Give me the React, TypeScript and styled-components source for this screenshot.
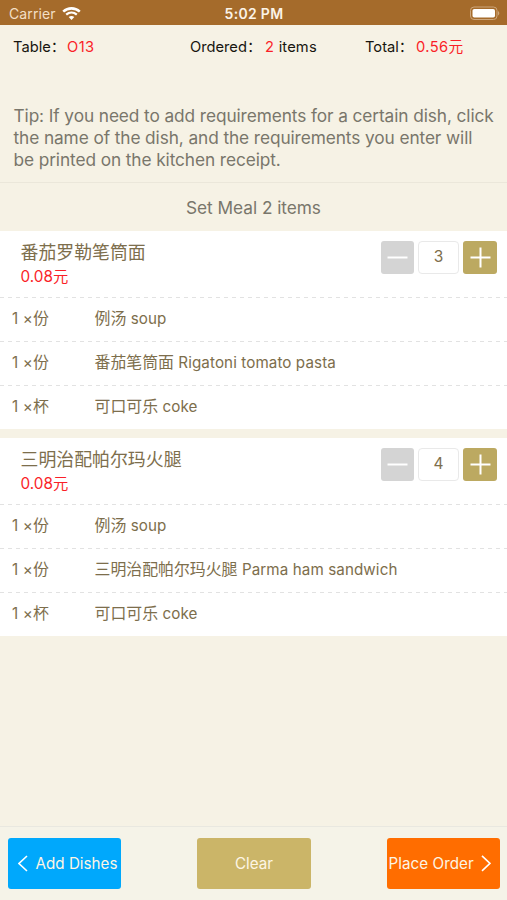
import React from "react";
import styled, { createGlobalStyle } from "styled-components";

const GlobalStyle = createGlobalStyle`
  *, *::before, *::after { box-sizing: border-box; }
  body { margin: 0; background: #f6f2e5; }
  button { font: inherit; border: 0; padding: 0; margin: 0; }
`;

const Screen = styled.div`
  width: 507px;
  height: 900px;
  display: flex;
  flex-direction: column;
  overflow: hidden;
  background: #f6f2e5;
  font-family: Inter, "Noto Sans CJK SC", sans-serif;
  color: #7d6e4c;
`;

const StatusBar = styled.header`
  height: 25px;
  flex: none;
  display: grid;
  grid-template-columns: 1fr auto 1fr;
  align-items: center;
  padding: 2px 7px 0 9px;
  background: #a56b2b;
  color: #fbf3e8;
  font-size: 14px;
  line-height: 20px;
`;

const Carrier = styled.div`
  display: flex;
  align-items: center;
  gap: 6px;
  color: #f3dfc5;
  letter-spacing: 0.1px;
`;

const Clock = styled.div`
  font-weight: 600;
  font-size: 14px;
  letter-spacing: 0.3px;
  margin-right: 1px;
`;

const Battery = styled.svg`
  justify-self: end;
`;

const Summary = styled.div`
  height: 79px;
  flex: none;
  display: grid;
  grid-template-columns: 177px 175px 1fr;
  padding: 12px 0 0 13px;
  font-size: 14.7px;
  line-height: 20px;
  color: #17150f;
`;

const SummaryItem = styled.div`
  display: flex;
  white-space: pre;
  letter-spacing: 0.15px;
`;

const Label = styled.span<{ $width: number }>`
  width: ${(p) => p.$width}px;
  letter-spacing: 0;
`;

const Red = styled.span`
  color: #fa1f28;
  letter-spacing: 0.4px;
`;

const Tip = styled.p`
  flex: none;
  height: 79px;
  margin: 0;
  padding: 1px 0 0 13.5px;
  border-bottom: 1px solid #ebe7da;
  font-size: 17.3px;
  line-height: 22px;
  letter-spacing: -0.1px;
  color: #79766b;
  white-space: pre;
`;

const SectionTitle = styled.h2`
  flex: none;
  height: 48px;
  margin: 0;
  font-size: 17.3px;
  font-weight: 400;
  line-height: 50px;
  letter-spacing: -0.05px;
  text-align: center;
  color: #79766b;
`;

const Meals = styled.main`
  flex: 1;
  display: flex;
  flex-direction: column;
  gap: 9px;
`;

const Card = styled.section`
  background: #fff;
`;

const CardHeader = styled.div`
  height: 66px;
  display: flex;
  justify-content: space-between;
  padding: 10px 10px 0 20.5px;
`;

const MealName = styled.h3`
  margin: 0;
  font-size: 17.9px;
  font-weight: 400;
  line-height: 23px;
`;

const Price = styled.div`
  color: #fa1f28;
  font-size: 15.3px;
  line-height: 25px;
`;

const Stepper = styled.div`
  display: flex;
  gap: 4px;
`;

const StepButton = styled.button<{ $active?: boolean }>`
  width: ${(p) => (p.$active ? 34 : 33)}px;
  height: 33px;
  display: grid;
  place-items: center;
  border-radius: 3px;
  background: ${(p) => (p.$active ? "#bca961" : "#d4d4d4")};
`;

const Count = styled.div`
  width: 41px;
  height: 33px;
  border: 1px solid #e9e9e9;
  border-radius: 4px;
  font-size: 15.5px;
  line-height: 30px;
  text-align: center;
`;

const DishRow = styled.div`
  height: 44px;
  display: grid;
  grid-template-columns: 82.5px 1fr;
  padding-left: 12px;
  font-size: 15.2px;
  line-height: 44px;
  background: repeating-linear-gradient(90deg, #e2e2e2 0 4px, transparent 4px 8px) 0 0 / 100% 1px no-repeat;
`;

const Quantity = styled.span`
  letter-spacing: 0.2px;
`;

const DishName = styled.span`
  white-space: nowrap;
  letter-spacing: 0.09px;
`;

const Cjk = styled.span`
  font-size: 15.9px;
  letter-spacing: 0;
`;

const Footer = styled.footer`
  flex: none;
  height: 74px;
  display: flex;
  justify-content: space-between;
  padding: 11px 7px 0 8px;
  border-top: 1px solid #e9e8e0;
  background: #f5f3e8;
`;

const Action = styled.button<{ $color: string }>`
  width: 114px;
  height: 51px;
  display: flex;
  align-items: center;
  justify-content: center;
  gap: 8px;
  border-radius: 3px;
  background: ${(p) => p.$color};
  color: #fdf5e4;
  font-size: 15.2px;
  white-space: nowrap;
`;

const AddDishes = styled(Action)`
  width: 113px;
  padding-left: 6px;
`;

const PlaceOrder = styled(Action)`
  width: 113px;
  justify-content: flex-start;
  gap: 7px;
  padding-left: 1.5px;
  letter-spacing: 0.05px;
`;

const WifiIcon = () => (
  <svg width="19" height="14" viewBox="0 0 19 14" fill="none" stroke="#fff">
    <path d="M1.2 4.6C6 .3 13 .3 17.8 4.6" strokeWidth="2.6" />
    <path d="M4.2 7.7c3.1-2.7 7.5-2.7 10.6 0" strokeWidth="2.3" />
    <path d="M6.7 10c1.7-1.3 3.9-1.3 5.6 0L9.5 12.9Z" fill="#fff" stroke="none" />
  </svg>
);

const BatteryIcon = () => (
  <Battery width="31" height="15" viewBox="0 0 31 15">
    <rect x="1.5" y="1" width="26.5" height="12.5" rx="3.5" fill="none" stroke="#cda67b" />
    <rect x="3.5" y="3" width="22.5" height="8.5" rx="1.8" fill="#fff" />
    <path d="M29 5c1.8.7 1.8 3.8 0 4.5Z" fill="#cda67b" />
  </Battery>
);

const StepIcon = ({ plus }: { plus?: boolean }) => (
  <svg width="21" height="21" viewBox="0 0 21 21" stroke="#fff" strokeWidth="2">
    <path d={plus ? "M.5 10.5h20M10.5 .5v20" : "M.5 10.5h20"} />
  </svg>
);

const Chevron = ({ right }: { right?: boolean }) => (
  <svg width="10" height="18" viewBox="0 0 10 18" fill="none" stroke="#fff" strokeWidth="1.6">
    <path d={right ? "M1 .8 9 8.3 1 15.8" : "M9 1 1 8.5 9 16"} />
  </svg>
);

type Dish = { unit: string; cjk: string; latin: string };
type Meal = { name: string; count: number; dishes: Dish[] };

const meals: Meal[] = [
  {
    name: "番茄罗勒笔筒面",
    count: 3,
    dishes: [
      { unit: "份", cjk: "例汤", latin: "soup" },
      { unit: "份", cjk: "番茄笔筒面", latin: "Rigatoni tomato pasta" },
      { unit: "杯", cjk: "可口可乐", latin: "coke" },
    ],
  },
  {
    name: "三明治配帕尔玛火腿",
    count: 4,
    dishes: [
      { unit: "份", cjk: "例汤", latin: "soup" },
      { unit: "份", cjk: "三明治配帕尔玛火腿", latin: "Parma ham sandwich" },
      { unit: "杯", cjk: "可口可乐", latin: "coke" },
    ],
  },
];

const tip = [
  "Tip: If you need to add requirements for a certain dish, click",
  "the name of the dish, and the requirements you enter will",
  "be printed on the kitchen receipt.",
].join("\n");

export default function App() {
  return (
    <Screen>
      <GlobalStyle />
      <StatusBar>
        <Carrier>
          Carrier
          <WifiIcon />
        </Carrier>
        <Clock>5:02 PM</Clock>
        <BatteryIcon />
      </StatusBar>
      <Summary>
        <SummaryItem>
          <Label $width={54}>Table：</Label>
          <Red>O13</Red>
        </SummaryItem>
        <SummaryItem>
          <Label $width={75}>Ordered：</Label>
          <Red>2</Red> items
        </SummaryItem>
        <SummaryItem>
          <Label $width={51}>Total：</Label>
          <Red>0.56元</Red>
        </SummaryItem>
      </Summary>
      <Tip>{tip}</Tip>
      <SectionTitle>Set Meal 2 items</SectionTitle>
      <Meals>
        {meals.map((meal) => (
          <Card key={meal.name}>
            <CardHeader>
              <div>
                <MealName>{meal.name}</MealName>
                <Price>0.08元</Price>
              </div>
              <Stepper>
                <StepButton aria-label="Remove one">
                  <StepIcon />
                </StepButton>
                <Count>{meal.count}</Count>
                <StepButton $active aria-label="Add one">
                  <StepIcon plus />
                </StepButton>
              </Stepper>
            </CardHeader>
            {meal.dishes.map((dish) => (
              <DishRow key={dish.cjk}>
                <Quantity>
                  1 ×<Cjk>{dish.unit}</Cjk>
                </Quantity>
                <DishName>
                  <Cjk>{dish.cjk}</Cjk> {dish.latin}
                </DishName>
              </DishRow>
            ))}
          </Card>
        ))}
      </Meals>
      <Footer>
        <AddDishes $color="#00a8fc">
          <Chevron />
          Add Dishes
        </AddDishes>
        <Action $color="#cbb568">Clear</Action>
        <PlaceOrder $color="#ff6d00">
          Place Order
          <Chevron right />
        </PlaceOrder>
      </Footer>
    </Screen>
  );
}
